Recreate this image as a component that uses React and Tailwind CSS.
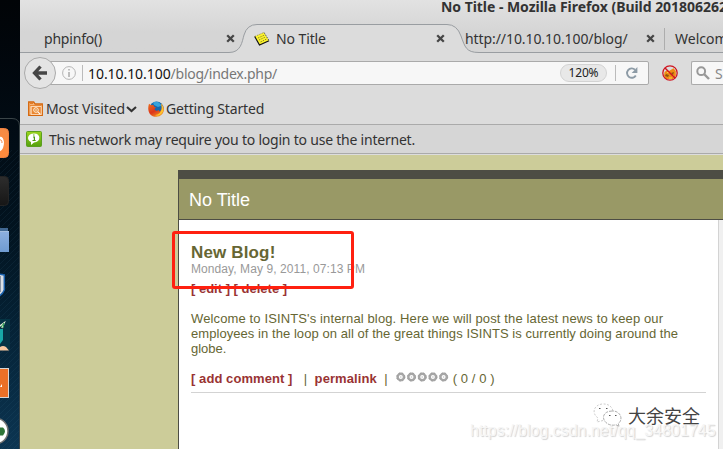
import React from 'react';

const CloseIcon = () => (
  <svg className="h-[9px] w-[9px] shrink-0" viewBox="0 0 9 9">
    <path d="M1.2 1.2 7.8 7.8M7.8 1.2 1.2 7.8" stroke="#464646" strokeWidth="2.3" />
  </svg>
);

const NoteIcon = () => (
  <svg className="h-4 w-4 shrink-0" viewBox="0 0 16 16">
    <path d="M.7 5.5 10 1.5 15 9.5 6 14Z" fill="#fbf32c" />
    <path d="M.7 5.5 10 1.5" stroke="#a89e50" strokeDasharray="1.5 1" />
    <path d="M10 1.5 15 9.5" fill="none" stroke="#555" strokeDasharray="1.5 1" />
    <path d="M.7 5.5 5.5 14 15 9.8" fill="none" stroke="#111" strokeWidth="1.2" />
    <path d="M4 7 10 4.3M5 9 11.5 6M6.5 11 12.5 8" stroke="#77701f" strokeWidth=".8" strokeDasharray="1.5 1" />
  </svg>
);

const MostVisitedIcon = () => (
  <svg className="h-[15px] w-[15px] shrink-0" viewBox="0 0 15 15">
    <path d="M.7 1h5l1.4 2h7.2v11.3H.7Z" fill="#f7b77c" stroke="#d5670d" strokeWidth="1.3" />
    <path d="M2 2.5h3M2 4.7h11" stroke="#e37c24" />
    <rect x="3.2" y="5.6" width="10" height="8" fill="#ea8833" stroke="#ffe5ca" strokeWidth=".8" />
    <circle cx="8" cy="9" r="2.3" fill="#e6811e" stroke="#fff4e8" />
    <circle cx="8" cy="9" r=".8" fill="#fff" />
    <path d="m9.8 10.8 2.4 2.4" stroke="#fff" strokeWidth="1.1" />
  </svg>
);

const FirefoxIcon = () => (
  <svg className="h-4 w-4 shrink-0" viewBox="0 0 16 16">
    <defs>
      <linearGradient id="fox" x1="0" y1="0" x2=".6" y2="1">
        <stop offset="0" stopColor="#ee721d" />
        <stop offset=".6" stopColor="#dc351b" />
        <stop offset="1" stopColor="#f48b22" />
      </linearGradient>
    </defs>
    <circle cx="8.6" cy="7.4" r="7" fill="#1768ad" />
    <path d="M5 1.5c4-2.2 7.5.2 8.3 3.3L10 6 6 4Z" fill="#36a3dc" />
    <path d="M1 2.8 3.2 4.3C4.4 3.8 5.7 4 6 4.6c-.3 1 .4 1.5 2.1 1.8L6.5 8c.3 1.8 2.8 2.4 4.5 1.1-.2 2 .8 1.8 2.2-.3 1-1.9.9-4.3-.2-6.4 3.5 3.3 3.7 7.8 1 10.9-3.1 3.5-9.2 3.3-12.1-.4C-.2 10-.1 5.9 1 2.8Z" fill="url(#fox)" />
    <path d="M13 2.4c2.7 2.6 3.5 6.3 1.6 9.2-1.7 2.7-5 3.8-7.6 2.6 4.8-.5 8.1-4.4 6-11.8Z" fill="#fbc42e" />
  </svg>
);

const MessageIcon = () => (
  <svg className="h-4 w-4 shrink-0" viewBox="0 0 16 16">
    <defs>
      <linearGradient id="msg" x2="0" y2="1">
        <stop stopColor="#9bd51d" />
        <stop offset="1" stopColor="#55a00e" />
      </linearGradient>
    </defs>
    <rect x=".5" y=".5" width="15" height="15" rx="1" fill="url(#msg)" stroke="#5c9f1f" />
    <path d="M8 2.6c7.2 0 7.2 8.6 0 8.9L5 14v-3C.2 9 1.3 2.6 8 2.6Z" fill="#fff" />
    <path d="M7 6h1.4v3.4M6.5 9.5h3.2M7.1 4h1.4" fill="none" stroke="#4d980e" strokeWidth="1.2" />
  </svg>
);

const BlockedFoxIcon = () => (
  <svg className="h-4 w-4 shrink-0" viewBox="0 0 16 16">
    <path d="m2.5 7 2-1.5L7 6l4.5-2.7L13.8 6v5l-3 3H4l-2-3Z" fill="#ee8b12" />
    <path d="m4 9 3 1-1 2-3-1ZM9 8l3-1-1 3Z" fill="#8d540d" />
    <path d="M5 7.5h2M10 11h2M7 13h3" stroke="#ffd13f" />
    <circle cx="8" cy="8" r="7.2" fill="none" stroke="#cf1420" strokeWidth="1.3" />
    <path d="m3 3 10 10" stroke="#cf1420" strokeWidth="1.4" />
  </svg>
);

function Dock() {
  return (
    <aside className="h-full w-5 shrink-0 bg-gradient-to-b from-[#010407] via-[#02131f] to-[#0c3552]">
      <svg className="block h-full w-5" viewBox="0 0 20 449">
        <defs>
          <pattern id="weave" width="6" height="6" patternUnits="userSpaceOnUse">
            <path d="M0 6 6 0" stroke="#3c7090" strokeWidth=".6" opacity=".18" />
          </pattern>
          <linearGradient id="orange" x2="0" y2="1"><stop stopColor="#f58b45" /><stop offset="1" stopColor="#ff8a3c" /></linearGradient>
          <linearGradient id="black" x2="0" y2="1"><stop stopColor="#2d2d2d" /><stop offset="1" stopColor="#161616" /></linearGradient>
          <linearGradient id="folder" x2="0" y2="1"><stop stopColor="#8db0df" /><stop offset="1" stopColor="#6f9bd0" /></linearGradient>
        </defs>
        <rect y="150" width="20" height="299" fill="url(#weave)" />
        <path d="M0 118.5h12q7.5 0 7.5 7.5v323" fill="none" stroke="#3b4548" />
        <rect x="-20" y="128.5" width="28.5" height="29" rx="4" fill="url(#orange)" stroke="#ee8040" />
        <path d="M-2 137.5Q3 135 4 142q0 9-6 10" fill="#fff" />
        <path d="M-1 140q3-1 3 3" fill="none" stroke="#f48545" strokeWidth="1" />
        <rect x="-20" y="176.5" width="28.5" height="29" rx="4" fill="url(#black)" stroke="#242424" />
        <path d="M0 228h8v3H0Z" fill="#416892" />
        <path d="M0 231h9v21H0Z" fill="url(#folder)" />
        <path d="M0 231.5h9" stroke="#a5bfdf" />
        <path d="M-2 274 4.3 275v15q-2 5-7 7" fill="#dce0e5" stroke="#1a61ad" strokeWidth="1.5" />
        <path d="M0 276h1v16H0" fill="#8a94a3" />
        <path d="M0 319h10v31H0Z" fill="#053444" />
        <path d="M0 329h3v11l-3 4Z" fill="#18aaa7" />
        <path d="m0 326 4-3-2 5" fill="none" stroke="#e5f0db" strokeWidth="1.6" />
        <path d="m1 327 3-4-1 5" fill="none" stroke="#299954" />
        <path d="M0 347q3-2 6 0l3 3.5H0Z" fill="#f8caa0" />
        <rect x="-20" y="368.5" width="28.5" height="29" fill="#eb7027" stroke="#d6d6d6" />
        <path d="m0 387 2-3v3Z" fill="#fff" />
        <circle cx="-5" cy="431" r="13" fill="#fff" stroke="#737373" strokeWidth="1.5" />
        <path d="M0 427.5h3q4 3.5 0 8H0Z" fill="#2f7538" />
      </svg>
    </aside>
  );
}

function TabStrip() {
  return (
    <div className="relative h-[29px] shrink-0 text-[#333] text-[14px] leading-[29px]">
      <svg className="absolute inset-0 h-[29px] w-[703px]" viewBox="0 0 703 29">
        <path d="M0 28.5H209C221 28.5 222 18 224 11Q227 .5 237 .5H427Q437 .5 441 12C445 23 446 28.5 459 28.5H703V29H0Z" fill="#dcdcdc" />
        <path d="M0 28.5H209C221 28.5 222 18 224 11Q227 .5 237 .5H427Q437 .5 441 12C445 23 446 28.5 459 28.5H703" fill="none" stroke="#999da1" />
        <path d="M644.5 4v22" stroke="#adadad" />
      </svg>
      <div className="relative flex h-full items-center overflow-hidden whitespace-nowrap pl-6">
        <span className="w-[182px] shrink-0 tracking-[-0.2px]">phpinfo()</span>
        <CloseIcon />
        <div className="ml-[19px] flex w-[182px] shrink-0 items-center gap-[6px]"><NoteIcon /><span className="tracking-[-0.1px]">No Title</span></div>
        <CloseIcon />
        <span className="ml-5 w-[181px] shrink-0 tracking-[-0.08px]">http://10.10.10.100/blog/</span>
        <CloseIcon />
        <span className="ml-5">Welcome</span>
      </div>
    </div>
  );
}

function NavBar() {
  return (
    <div className="flex h-10 shrink-0 items-center pl-1">
      <div className="z-10 flex h-8 w-8 shrink-0 items-center justify-center rounded-full border border-[#aaa] bg-[#e4e4e4]">
        <svg className="h-4 w-4" viewBox="0 0 16 16"><path d="M8.5 1.5 2.5 8l6 6.5M3 8h12" fill="none" stroke="#464646" strokeWidth="3.3" /></svg>
      </div>
      <div className="-ml-2 flex h-6 w-[601px] shrink-0 items-center rounded-r-[2px] border border-[#aaa] bg-[#f7f7f7] pl-[13px]">
        <svg className="h-[14px] w-[14px]" viewBox="0 0 14 14"><circle cx="7" cy="7" r="6.4" fill="none" stroke="#b5b5b5" /><path d="M7 6v5M7 3v1.5" stroke="#aaa" strokeWidth="1.5" /></svg>
        <span className="ml-[6px] h-4 w-px bg-[#bbb]" />
        <span className="ml-[5px] whitespace-nowrap text-[14px] tracking-[-0.25px] text-[#777]"><span className="text-[#111] tracking-[-0.06px]">10.10.10.100</span>/blog/index.php/</span>
        <span className="ml-auto flex h-[18px] w-[47px] items-center justify-center rounded-full border border-[#d3d3d3] bg-[#e8e8e8] text-[12px] tracking-[-0.2px] text-[#222]">120%</span>
        <span className="ml-2 h-4 w-px bg-[#bbb]" />
        <svg className="mx-[9px] h-[14px] w-[14px]" viewBox="0 0 14 14"><path d="M10.8 9.5A4.7 4.7 0 1 1 10 3.7" fill="none" stroke="#8d9ba6" strokeWidth="1.9" /><path d="M12.4 1v6H6.7Z" fill="#8d9ba6" /></svg>
      </div>
      <div className="ml-[13px]"><BlockedFoxIcon /></div>
      <div className="ml-[13px] flex h-6 flex-1 items-center overflow-hidden rounded-l-[2px] border border-r-0 border-[#aaa] bg-[#f7f7f7] pl-1">
        <svg className="h-[14px] w-[14px] shrink-0" viewBox="0 0 14 14"><circle cx="5.2" cy="5.2" r="3.9" fill="none" stroke="#999" strokeWidth="2" /><path d="m8 8 5 5" stroke="#999" strokeWidth="2.4" /></svg>
        <span className="ml-[5px] text-[14px] text-[#888]">Search</span>
      </div>
    </div>
  );
}

function Rating() {
  return (
    <svg className="mr-[4px] ml-2 h-[10px] w-[53px]" viewBox="0 0 53 10">
      {[0, 1, 2, 3, 4].map((i) => (
        <g key={i} transform={`translate(${i * 10.7 + 4.8} 5)`}>
          <circle r="3.2" fill="none" stroke="#a6a6a6" strokeWidth="2.4" />
          <circle r="4.1" fill="none" stroke="#999" strokeWidth=".8" strokeDasharray="1.6 1.7" />
          <circle r=".8" fill="#c4c4c4" />
        </g>
      ))}
    </svg>
  );
}

function Blog() {
  return (
    <main className="flex flex-1 flex-col overflow-hidden bg-[#cc9] pt-[15px] pl-[158px] font-['Liberation_Sans',Arial,sans-serif]">
      <div className="flex flex-1 flex-col border-l border-[#4d4d44] bg-white">
        <div className="h-[9px] shrink-0 bg-[#4d4d44]" />
        <h1 className="h-[41px] shrink-0 border-b border-[#4d4d44] bg-[#996] pl-[10px] text-[18px] leading-[42px] text-white">No Title</h1>
        <div className="flex flex-1">
          <article className="w-[539px] shrink-0 px-3 pt-[23px] text-[13px] leading-[15px] text-[#663]">
            <h2 className="text-[17px] font-bold leading-[19px] tracking-[-0.05px]"><span className="tracking-[0.15px]">New Blog!</span></h2>
            <p className="text-[12px] leading-[14px] tracking-[0.08px] text-[#999]">Monday, May 9, 2011, 07:13 PM</p>
            <p className="mt-[5px] font-bold text-[#993333]">[ edit ] [ delete ]</p>
            <p className="mt-[15px] whitespace-nowrap"><span className="tracking-[0.13px]">Welcome to ISINTS's internal blog. Here we will post the latest news to keep our</span><br /><span className="tracking-[0.06px]">employees in the loop on all of the great things ISINTS is currently doing around the</span><br />globe.</p>
            <div className="mt-[15px] flex h-[22px] items-start border-b border-[#d3d3d3] whitespace-pre">
              <span className="font-bold tracking-[0.07px] text-[#993333]">[ add comment ]</span><span className="tracking-[0.12px]">{'   |  '}</span><span className="font-bold tracking-[0.08px] text-[#993333]">permalink</span><span className="tracking-[0.1px]">{'  |'}</span>
              <span className="pt-[1px]"><Rating /></span><span className="tracking-[0.1px]">( 0 / 0 )</span>
            </div>
          </article>
          <div className="flex-1 border-l border-[#d3d3d3] bg-[#f0f0f0]" />
        </div>
      </div>
    </main>
  );
}

export default function App() {
  return (
    <div className="relative flex h-[449px] w-[723px] overflow-hidden">
      <Dock />
      <div className="flex w-[703px] flex-col font-['Noto_Sans',sans-serif]">
        <header className="flex h-[155px] shrink-0 flex-col overflow-hidden bg-[#dcdcdc] text-[#333]">
          <div className="flex h-[53px] shrink-0 flex-col bg-gradient-to-b from-[#e2e2e2] to-[#d5d5d5] to-60%">
            <div className="h-6 whitespace-nowrap pl-[421px] text-[14px] font-bold leading-[14px] tracking-[-0.04px]">No Title - Mozilla Firefox (Build 201806262</div>
            <TabStrip />
          </div>
          <NavBar />
          <div className="flex h-[32px] shrink-0 items-center border-b border-[#aaa] pl-2 text-[14px]">
            <MostVisitedIcon />
            <span className="ml-[3px] w-[80px] whitespace-nowrap tracking-[-0.12px]">Most Visited</span>
            <svg className="h-3 w-[11px]" viewBox="0 0 11 12"><path d="m1 4 4.5 4L10 4" fill="none" stroke="#333" strokeWidth="2.1" /></svg>
            <span className="ml-[11px]"><FirefoxIcon /></span>
            <span className="ml-[2px] tracking-[-0.17px]">Getting Started</span>
          </div>
          <div className="flex h-[29px] shrink-0 items-center border-b border-[#aaa] bg-[#d6d6d6] pl-[6px] text-[14px]"><MessageIcon /><span className="ml-[7px] whitespace-nowrap tracking-[-0.22px]">This network may require you to login to use the internet.</span></div>
        </header>
        <Blog />
      </div>
      <div className="absolute left-[172px] top-[231px] h-[58px] w-[182px] rounded-[3px] border-3 border-[#ff2010]" />
      <div className="absolute left-[470px] top-[421px] whitespace-nowrap font-['Liberation_Sans',sans-serif] text-[16px] leading-[20px] text-[#f6f6f6] [text-shadow:1px_1px_1px_#d2d2d2]">https://blog.csdn.net/qq_34801745</div>
      <div className="absolute left-[593px] top-[402px] flex items-center">
        <svg className="h-[26px] w-[29px]" viewBox="0 0 29 26">
          <path d="M10 18.5 4 20l1-4C-2 11 1 3 9 2c7-.5 10 3 11 7" fill="white" stroke="#aaa" strokeWidth=".6" strokeDasharray="2 1.5" />
          <path d="M19 9c-10 .3-11 9-4 13 3 1.5 6 1.4 8 .7l3 1.8-.7-3C31 17 27 8.5 19 9Z" fill="white" stroke="#777" strokeWidth=".6" strokeDasharray="3 1" />
          <path d="M6 6.5h1.5M13 6.5h1.5M16 13.5h1.5M22 13.5h1.5" stroke="#555" strokeWidth="1" />
        </svg>
        <span className="ml-[6px] whitespace-nowrap font-['Noto_Sans_CJK_SC',sans-serif] text-[18px] leading-[24px] text-[#444] [text-shadow:-1px_-1px_0_#fff]">大余安全</span>
      </div>
    </div>
  );
}
